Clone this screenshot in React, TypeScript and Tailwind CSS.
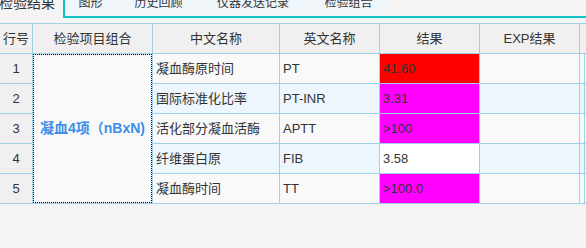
const rows = [
  { no: '1', cn: '凝血酶原时间', en: 'PT', result: '41.60', color: 'bg-[#ff0000]' },
  { no: '2', cn: '国际标准化比率', en: 'PT-INR', result: '3.31', color: 'bg-[#ff00ff]' },
  { no: '3', cn: '活化部分凝血活酶', en: 'APTT', result: '>100', color: 'bg-[#ff00ff]' },
  { no: '4', cn: '纤维蛋白原', en: 'FIB', result: '3.58', color: 'bg-white' },
  { no: '5', cn: '凝血酶时间', en: 'TT', result: '>100.0', color: 'bg-[#ff00ff]' },
];

const tabs = [
  { label: '图形', w: 'w-[51px]', ml: 'ml-0' },
  { label: '历史回顾', w: 'w-[77px]', ml: 'ml-[4px]' },
  { label: '仪器发送记录', w: 'w-[106px]', ml: 'ml-[3px]' },
  { label: '检验组合', w: 'w-[77px]', ml: 'ml-[4px]' },
];

export default function App() {
  return (
    <div className="h-[248px] w-[586px] overflow-hidden bg-[#f4f4f4] font-['Liberation_Sans','Noto_Sans_CJK_SC',sans-serif] text-[#333]">
      {/* tab strip */}
      <div className="flex h-[18px]">
        <div className="flex h-[16px] w-[63px] justify-end overflow-hidden pr-[8px]">
          <div className="-mt-[4px] whitespace-nowrap text-[14px] leading-[14px]">检验结果</div>
        </div>
        <div className="flex flex-1 items-start border-b-2 border-l-2 border-[#12c4c6]">
          {tabs.map((t) => (
            <div key={t.label} className={`${t.w} ${t.ml} flex h-[15px] justify-center overflow-hidden bg-[#eef6fc]`}>
              <div className="-mt-[3px] whitespace-nowrap text-[12px] leading-[12px]">{t.label}</div>
            </div>
          ))}
        </div>
      </div>

      {/* grid */}
      <div className="mt-[5px] grid grid-cols-[32px_119px_126px_99px_99px_99px_4px_1fr] grid-rows-[29px_29px_29px_29px_29px_29px] gap-px bg-[#9fd0ea] py-px text-[13px]">
        <div className="flex items-center justify-center bg-[#f0f0f0]">行号</div>
        <div className="flex items-center justify-center bg-[#f0f0f0]">检验项目组合</div>
        <div className="flex items-center justify-center bg-[#f0f0f0]">中文名称</div>
        <div className="flex items-center justify-center bg-[#f0f0f0]">英文名称</div>
        <div className="flex items-center justify-center bg-[#f0f0f0]">结果</div>
        <div className="flex items-center justify-center bg-[#f0f0f0]">EXP结果</div>
        <div className="col-span-2 bg-[#f0f0f0]" />

        {rows.map((r, i) => {
          const bg = i % 2 === 0 ? 'bg-[#f9f9f9]' : 'bg-[#eef6fd]';
          return [
            <div key={`n${i}`} className="col-start-1 flex items-center justify-center bg-[#f0f0f0]">
              {r.no}
            </div>,
            i === 0 ? (
              <div
                key="group"
                className="col-start-2 row-span-5 flex items-center justify-center whitespace-nowrap border border-dotted border-black bg-[#f9f9f9] text-[14px] font-bold text-[#3a8ee8]"
              >
                凝血4项（nBxN)
              </div>
            ) : null,
            <div key={`c${i}`} className={`col-start-3 flex items-center px-[3px] ${bg}`}>
              {r.cn}
            </div>,
            <div key={`e${i}`} className={`flex items-center px-[3px] ${bg}`}>
              {r.en}
            </div>,
            <div key={`r${i}`} className={`flex items-center px-[3px] ${r.color}`}>
              {r.result}
            </div>,
            <div key={`x${i}`} className={bg} />,
            <div key={`s${i}`} className={bg} />,
            <div key={`t${i}`} className={bg} />,
          ];
        })}
      </div>
    </div>
  );
}
